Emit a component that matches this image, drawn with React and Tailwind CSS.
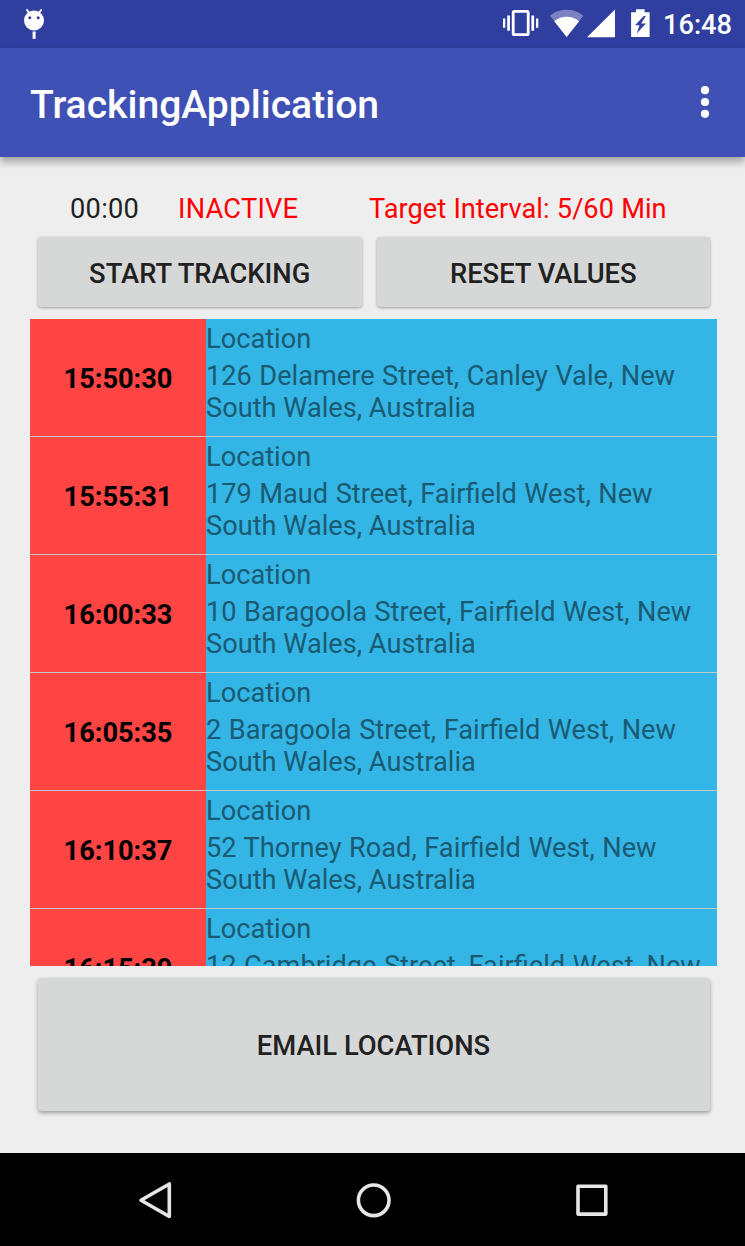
import React from 'react';

const ENTRIES = [
  { time: '15:50:30', lines: ['126 Delamere Street, Canley Vale, New', 'South Wales, Australia'] },
  { time: '15:55:31', lines: ['179 Maud Street, Fairfield West, New', 'South Wales, Australia'] },
  { time: '16:00:33', lines: ['10 Baragoola Street, Fairfield West, New', 'South Wales, Australia'] },
  { time: '16:05:35', lines: ['2 Baragoola Street, Fairfield West, New', 'South Wales, Australia'] },
  { time: '16:10:37', lines: ['52 Thorney Road, Fairfield West, New', 'South Wales, Australia'] },
  { time: '16:15:39', lines: ['12 Cambridge Street, Fairfield West, New', 'South Wales, Australia'] },
];

function DebugIcon() {
  return (
    <svg className="h-[48px] w-[24px]" viewBox="22 0 24 48" fill="#fff">
      <circle cx="34" cy="20.5" r="10" />
      <path d="M29.2 13 27 10M38.8 13 41.2 10" stroke="#fff" strokeWidth="2" strokeLinecap="round" />
      <rect x="32.6" y="31.5" width="3" height="7.3" />
      <circle cx="29.8" cy="17.8" r="1.5" fill="#303f9f" />
      <circle cx="38.2" cy="17.8" r="1.5" fill="#303f9f" />
    </svg>
  );
}

function StatusIcons() {
  return (
    <svg className="h-[48px] w-[150px]" viewBox="502 0 150 48" fill="#fff">
      <rect x="513.2" y="11.3" width="15" height="23.4" rx="1.2" fill="none" stroke="#fff" strokeWidth="2.8" />
      <path d="M503 18.5h2.3v9.3H503zM507.2 15.6h2.7v15.2h-2.7zM531.4 15.6h2.7v15.2h-2.7zM536 18.5h2.3v9.3H536z" />
      <path d="M566.7 37 550 15.7C559.5 7.8 574 7.8 583.4 15.7Z" opacity="0.35" />
      <path d="M566.7 37 554.3 21.2C561.5 15.3 571.9 15.3 579.1 21.2Z" />
      <path d="M615 9.5V37.2H587Z" />
      <path d="M636 9.3h8.6v2.9h5v24.7h-18.5V12.2h4.9z" />
      <path d="M643.8 16 635 25.2h4.5l-2.8 8.3 9.2-10h-4.7l4.6-7.5z" fill="#303f9f" />
    </svg>
  );
}

function RaisedButton({ className, children }) {
  return (
    <button
      className={`flex items-center justify-center rounded-[4px] bg-[#d6d7d7] font-medium text-[27.35px] leading-[32px] text-[#212121] ${className}`}
    >
      {children}
    </button>
  );
}

function EntryRow({ entry }) {
  return (
    <div className="flex h-[118px] shrink-0 border-b border-[#c3c9cc]">
      <div className="flex w-[176px] items-center justify-center bg-[#ff4444] pt-[3px] font-bold text-black">
        {entry.time}
      </div>
      <div className="flex flex-1 flex-col gap-[5px] bg-[#33b5e5] pt-1 whitespace-nowrap text-[#1a5b73]">
        <div>Location</div>
        <div>
          {entry.lines.map((line) => (
            <div key={line} className="first:[word-spacing:0.75px]">{line}</div>
          ))}
        </div>
      </div>
    </div>
  );
}

export default function App() {
  return (
    <div className="flex h-[1246px] w-[745px] flex-col overflow-hidden bg-[#eeeeee] font-['Roboto',sans-serif] text-[27.2px] leading-[32px]">
      <div className="flex h-[47.5px] shrink-0 items-center bg-[#303f9f] pr-[13px] pl-[22px]">
        <DebugIcon />
        <div className="ml-auto flex items-center">
          <StatusIcons />
          <span className="w-[80px] pt-[2px] text-right font-medium text-white">16:48</span>
        </div>
      </div>
      <header className="flex h-[109.5px] shrink-0 items-center justify-between bg-[#3f51b5] pr-[35px] pl-[30px] shadow-[0_5px_8px_rgba(0,0,0,0.32)]">
        <h1 className="pt-[5px] text-[39.1px] leading-[46px] font-medium text-white">TrackingApplication</h1>
        <svg className="h-[36px] w-[10px]" viewBox="0 0 10 36" fill="#fff">
          <circle cx="5" cy="6.2" r="4.1" />
          <circle cx="5" cy="18" r="4.1" />
          <circle cx="5" cy="29.8" r="4.1" />
        </svg>
      </header>

      <main className="flex min-h-0 flex-1 flex-col pt-[36px] pr-[28px] pl-[30px]">
        <div className="flex shrink-0 whitespace-nowrap">
          <span className="w-[108px] pl-[40px] tracking-[0.3px] text-[#212121]">00:00</span>
          <span className="ml-[40px] w-[191px] tracking-[0.25px] text-[#ff0000]">INACTIVE</span>
          <span className="text-[#ff0000] [word-spacing:0.6px]">Target Interval: 5/60 Min</span>
        </div>
        <div className="mt-[12px] flex shrink-0 gap-[15px] pr-[7.5px] pl-[7.5px]">
          <RaisedButton className="h-[70px] w-[324.5px] pt-[3px] shadow-[0_1px_3px_rgba(0,0,0,0.35)]">START TRACKING</RaisedButton>
          <RaisedButton className="h-[70px] flex-1 pt-[3px] shadow-[0_1px_3px_rgba(0,0,0,0.35)]">RESET VALUES</RaisedButton>
        </div>
        <div className="mt-[12px] flex h-[647px] shrink-0 flex-col overflow-hidden">
          {ENTRIES.map((entry) => (
            <EntryRow key={entry.time} entry={entry} />
          ))}
        </div>
        <div className="mt-[12px] flex shrink-0 px-[7.5px]">
          <RaisedButton className="h-[133px] flex-1 pt-[3px] shadow-[0_2px_4px_rgba(0,0,0,0.35)]">EMAIL LOCATIONS</RaisedButton>
        </div>
      </main>

      <nav className="flex h-[93px] shrink-0 items-center justify-center bg-black">
        <svg className="h-[93px] w-[480px]" viewBox="133 1153 480 93" fill="none" stroke="#e6e6e6" strokeWidth="3.6" strokeLinejoin="round">
          <path d="M169.3 1184V1216.5L141 1200.2Z" />
          <circle cx="373.7" cy="1200.3" r="15.3" />
          <rect x="578" y="1186.3" width="27.8" height="27.8" />
        </svg>
      </nav>
    </div>
  );
}
